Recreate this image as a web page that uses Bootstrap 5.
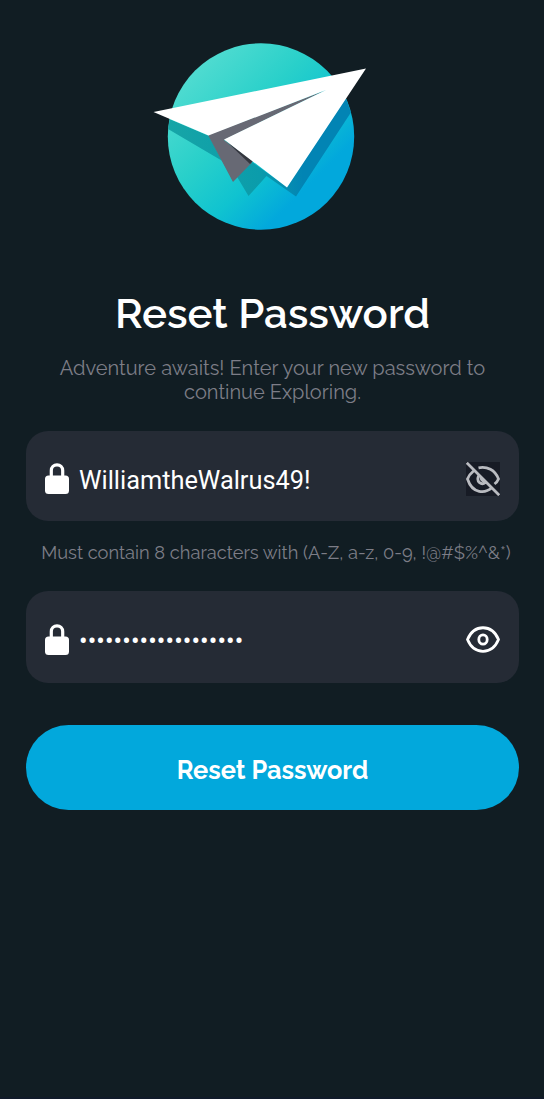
<!DOCTYPE html>
<html lang="en">
<head>
<meta charset="utf-8">
<meta name="viewport" content="width=device-width, initial-scale=1">
<title>Reset Password</title>
<link href="https://cdn.jsdelivr.net/npm/bootstrap@5.3.0/dist/css/bootstrap.min.css" rel="stylesheet">
<style>
body{background:#111d23;color:#fff;font-family:Raleway,Lato,"Open Sans",sans-serif;overflow:hidden}
.screen{height:1099px;padding:37px 25px 0 26px;border-bottom:2px solid #101a29}
.logo{width:224px;height:200px;margin-right:25px}
.title{font-size:42px;line-height:50px;font-weight:600;margin-top:52px;white-space:nowrap}
.hint{color:#7d7d87;font-size:20px;line-height:24px;font-weight:400}
.intro{margin-top:17px;margin-bottom:27px}
.field{background:#252b35;border-radius:22px;height:90px;padding:0 19px;font-family:Roboto,sans-serif}
.field-confirm{height:92px}
.field svg{margin-top:6px}
.value{font-size:25.350px;line-height:30px;margin-left:10px;padding-top:7px}
.dots{letter-spacing:.1px}
.rule{height:70px;padding-top:20px;padding-left:7px;font-size:18.250px;white-space:nowrap}
.submit,.submit:hover{background:#02a8dc;color:#fff;border:0;border-radius:43px;height:85px;margin-top:41.500px;font-size:25.300px;font-weight:700;padding:7px 0 0}
</style>
</head>
<body>
<main class="screen d-flex flex-column">
  <svg class="logo align-self-center flex-shrink-0" viewBox="148 37 224 200" aria-label="Paper plane">
    <defs>
      <linearGradient id="sky" x1="0" y1="0" x2="1" y2="1">
        <stop offset=".15" stop-color="#4edbd0"/><stop offset=".4" stop-color="#29d0ca"/><stop offset=".59" stop-color="#10c3d0"/><stop offset=".76" stop-color="#02a8dc"/>
      </linearGradient>
      <linearGradient id="shade" x1="0" y1="0" x2="1" y2="0"><stop offset="0" stop-color="#17a6a6"/><stop offset=".45" stop-color="#0b9cab"/><stop offset=".65" stop-color="#0284b4"/></linearGradient>
      <clipPath id="disc"><circle cx="261" cy="136.500" r="93"/></clipPath>
    </defs>
    <circle cx="261" cy="136.500" r="93.200" fill="url(#sky)"/>
    <path clip-path="url(#disc)" fill="url(#shade)" d="M160 115L163 126 219 159 230 165 248.500 196 266.500 176 296 196.500 380 68 365 69 287 187 252 162 233 181 209 136Z"/>
    <path fill="#676974" d="M208 135L325 90.500 224 140 252 162.500 233 182Z"/>
    <path fill="#33363e" d="M224 139L253 161 250 164Z"/>
    <path fill="#fff" d="M153.500 112L366 68.500 287 187.500 224 139.500 326 90 208.500 135.500Z"/>
  </svg>
  <h1 class="title text-center mb-0">Reset Password</h1>
  <p class="hint intro text-center">Adventure awaits! Enter your new password to<br>continue Exploring.</p>
  <div class="field d-flex align-items-center">
    <svg width="24" height="32" viewBox="0 0 24 32"><path d="M6.300 14V7.500a5.700 5.700 0 0 1 11.400 0V14" fill="none" stroke="#fff" stroke-width="3.200"/><rect y="12.500" width="24" height="18.500" rx="3.500" fill="#fff"/></svg>
    <span class="value">WilliamtheWalrus49!</span>
    <svg class="ms-auto" width="34" height="34" viewBox="0 0 34 34" fill="none" stroke="#b9bbc0" stroke-width="2.800"><path fill="#171b25" stroke="none" d="M0 0H34V34H0Z"/><path d="M7.500 9C4.500 11.500 2.500 14 1.500 17c5 15.500 18 14.500 24.500 8.500M12.500 5.800C21 4 29 8 32.500 17c-.8 2-2 3.500-4 5M12.500 14c-2.500 6 3 9.500 7 6.500M15.500 14.500c-1 2.500.5 4.500 3 4.500M.8.800 33.200 33.200"/></svg>
  </div>
  <p class="hint rule text-center mb-0">Must contain 8 characters with (A-Z, a-z, 0-9, !@#$%^&amp;*)</p>
  <div class="field field-confirm d-flex align-items-center">
    <svg width="24" height="32" viewBox="0 0 24 32"><path d="M6.300 14V7.500a5.700 5.700 0 0 1 11.400 0V14" fill="none" stroke="#fff" stroke-width="3.200"/><rect y="12.500" width="24" height="18.500" rx="3.500" fill="#fff"/></svg>
    <span class="value dots">•••••••••••••••••••</span>
    <svg class="ms-auto" width="34" height="34" viewBox="0 0 34 34" fill="none" stroke="#fff" stroke-width="2.800"><path d="M1.500 16.500C8 .8 26 .8 32.500 16.500 26 32.200 8 32.200 1.500 16.500Z" stroke-linejoin="round"/><ellipse cx="17" cy="16.500" rx="4.200" ry="4.700"/></svg>
  </div>
  <button class="btn submit w-100" type="button">Reset Password</button>
</main>
<script src="https://cdn.jsdelivr.net/npm/bootstrap@5.3.0/dist/js/bootstrap.bundle.min.js"></script>
</body>
</html>
